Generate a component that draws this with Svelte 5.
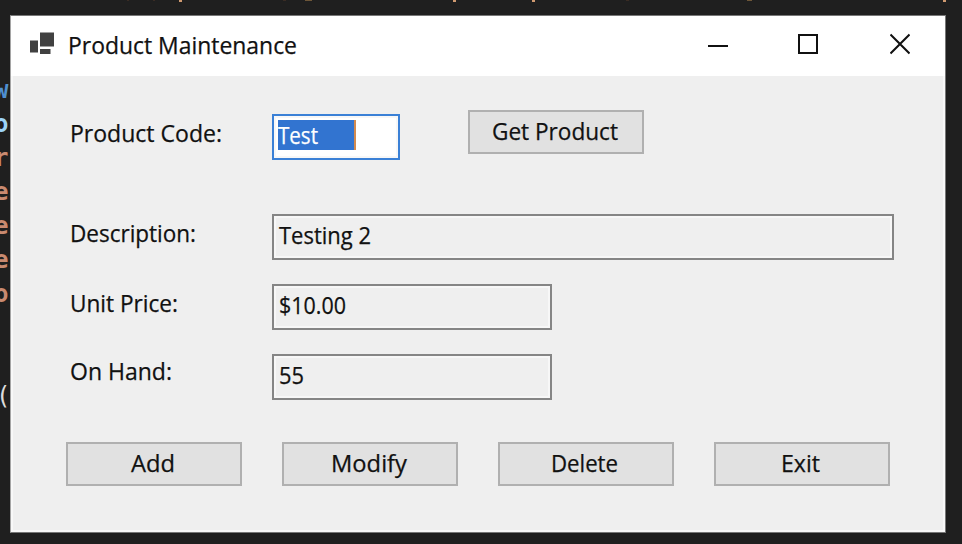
<script>
  const code = [
    { ch: 'w', color: '#4f8fcf' },
    { ch: 'o', color: '#9cd4f8' },
    { ch: 'r', color: '#c98a70' },
    { ch: 'e', color: '#c98a70' },
    { ch: 'e', color: '#c98a70' },
    { ch: 'e', color: '#c98a70' },
    { ch: 'o', color: '#c98a70' },
    { ch: ' ', color: '#dcdcdc' },
    { ch: ' ', color: '#dcdcdc' },
    { ch: '(', color: '#dcdcdc' },
  ];
  const actions = [
    { text: 'Add', width: 44 },
    { text: 'Modify', width: 76 },
    { text: 'Delete', width: 67 },
    { text: 'Exit', width: 39 },
  ];
</script>

{#snippet label(text, width)}
  <svg class="label" {width} height="32"><text x="0" y="25" textLength={width} lengthAdjust="spacingAndGlyphs">{text}</text></svg>
{/snippet}

<div class="desktop">
  <div class="gutter">
    {#each code as line}<span style:color={line.color}>{line.ch}</span>{/each}
  </div>
  <svg class="fragments" width="962" height="3">
    <path d="M127 0h2M153 0h2M283 0h3M626 0h3" stroke="#3a2c24" stroke-width="2" />
    <path d="M305 0h7M747 0h5" stroke="#6d5638" stroke-width="2" />
    <path d="M179 0h3M453 0h3M532 0h3M943 0h3" stroke="#d09a70" stroke-width="4" />
  </svg>

  <main class="window">
    <header>
      <svg class="app-icon" width="26" height="24" viewBox="0 0 26 24" fill="#414141">
        <path d="M0 8.5h8v12H0zM10 0.5h14v14H10zM10 17h10.500v5H10z" />
      </svg>
      {@render label('Product Maintenance', 229)}
      <div class="controls">
        <svg width="20" height="22" viewBox="0 0 20 22"><path d="M0 13h20" /></svg>
        <svg width="20" height="22" viewBox="0 0 20 22"><path d="M1 2h18v18H1z" /></svg>
        <svg width="20" height="22" viewBox="0 0 20 22"><path d="M0.500 1.500l19 19M19.500 1.500l-19 19" /></svg>
      </div>
    </header>

    <form onsubmit={(e) => e.preventDefault()}>
      <div class="row code-row">
        <div class="name">{@render label('Product Code:', 152)}</div>
        <div class="field focused"><div class="selection">{@render label('Test', 40)}</div></div>
        <button class="get">{@render label('Get Product', 126)}</button>
      </div>
      <div class="row">
        <div class="name">{@render label('Description:', 126)}</div>
        <div class="field wide">{@render label('Testing 2', 92)}</div>
      </div>
      <div class="row">
        <div class="name">{@render label('Unit Price:', 108)}</div>
        <div class="field">{@render label('$10.00', 67)}</div>
      </div>
      <div class="row last">
        <div class="name">{@render label('On Hand:', 102)}</div>
        <div class="field">{@render label('55', 25)}</div>
      </div>
      <div class="actions">
        {#each actions as action}
          <button>{@render label(action.text, action.width)}</button>
        {/each}
      </div>
    </form>
  </main>
</div>

<style>
  :global(body) { margin: 0; }
  .desktop {
    position: relative;
    box-sizing: border-box;
    width: 962px;
    height: 544px;
    padding: 15px 16px 11px 10px;
    overflow: hidden;
    background: #1f1f1f;
    font-family: 'Open Sans', 'Noto Sans', sans-serif;
  }
  .gutter {
    position: absolute;
    left: -6px;
    top: 73px;
    display: flex;
    flex-direction: column;
    font: 600 24px/34px 'DejaVu Sans Mono', monospace;
  }
  .gutter span { height: 34px; white-space: pre; }
  .gutter span:last-child { padding-left: 2px; font-weight: 400; }
  .fragments { position: absolute; left: 0; top: 0; }
  .window {
    position: relative;
    box-sizing: border-box;
    width: 936px;
    height: 518px;
    border: 1px solid #777;
    border-left-color: #a5a5a5;
    background: #efefef;
    box-shadow: inset 0 0 0 2px #f8f8f8;
  }
  .label { display: block; flex: none; overflow: visible; }
  .label text { font-size: 24px; fill: #111; stroke: #111; stroke-width: 0.25px; }
  header {
    display: flex;
    height: 60px;
    background: #fff;
  }
  .app-icon { margin: 15.500px 12px 0 19px; flex: none; }
  header .label { margin-top: 13px; }
  .controls { display: flex; gap: 72px; margin: 17px 35px 0 auto; }
  .controls svg { fill: none; stroke: #111; stroke-width: 2; }
  .controls svg:first-child { margin-right: -2px; }
  form { padding: 34px 51px 0 55px; }
  .row { display: flex; height: 46px; margin-bottom: 24px; }
  .code-row { height: 50px; margin-bottom: 54px; }
  .name { width: 206px; box-sizing: border-box; padding-left: 4px; padding-top: 3px; }
  .code-row .name { padding-top: 7px; }
  .last .name { padding-top: 1px; }
  .field {
    box-sizing: border-box;
    width: 280px;
    height: 46px;
    padding: 3px 4px 3px 5px;
    border: 2px solid #858585;
    box-shadow: inset 0 0 0 2px #f7f7f7;
  }
  .wide { width: 622px; }
  .focused {
    width: 128px;
    margin-top: 4px;
    padding: 4px;
    border-color: #3a80d6;
    background: #fff;
  }
  .selection {
    display: flex;
    box-sizing: border-box;
    width: 78px;
    height: 30px;
    background: #3274d0;
    border-right: 2px solid #d18a4f;
  }
  .selection .label { margin-top: -1px; }
  .selection text { fill: #fff; stroke: #fff; }
  button {
    display: flex;
    justify-content: center;
    box-sizing: border-box;
    width: 176px;
    height: 44px;
    padding: 3px 3px 0 0;
    border: 2px solid #b0b0b0;
    border-radius: 0;
    background: #e1e1e1;
    font: inherit;
  }
  .get { margin-left: 68px; }
  .actions { display: flex; gap: 40px; margin-top: 42px; }
</style>
